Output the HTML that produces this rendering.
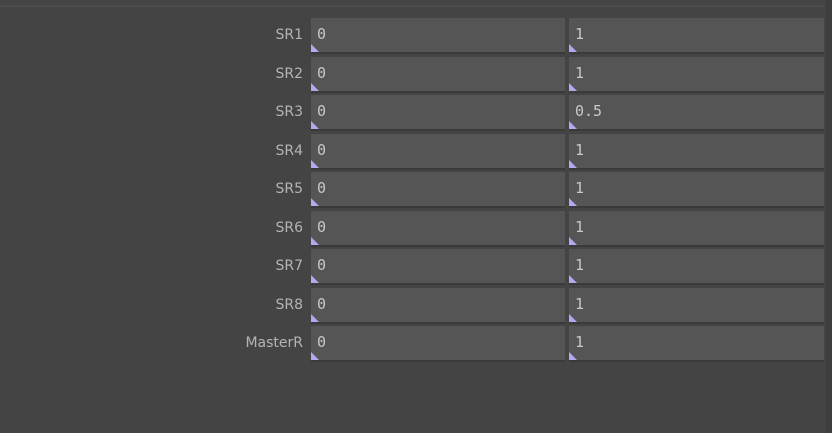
<!DOCTYPE html><html><head><style>
body{margin:0;width:832px;height:433px;background:#444;position:relative;overflow:hidden;font-family:"DejaVu Sans","Liberation Sans",sans-serif;}
.top{position:absolute;left:0;top:5px;width:824px;height:2px;background:#4c4c4c}
.rc{position:absolute;left:826px;top:0;width:6px;height:433px;background:#3e3e3e}
.lab{position:absolute;right:529px;width:120px;text-align:right;font-size:14px;color:#b4b4b4}
.f{position:absolute;height:34px;background:#555;border-bottom:2px solid #3a3a3a;color:#c8c8c8;font-size:15px;font-family:"DejaVu Sans Mono","Liberation Mono",monospace;}
.f span{position:absolute;left:6px;top:7px}
.f i{position:absolute;left:0;bottom:0;width:0;height:0;border-left:8px solid #b4a8f0;border-top:8px solid transparent}
</style></head><body>
<div class="top"></div><div class="rc"></div>
<div id="c"></div>
<script>
var l=["SR1","SR2","SR3","SR4","SR5","SR6","SR7","SR8","MasterR"],h="";
for(var k=0;k<9;k++){var y=18+k*38.5;
h+='<div class="lab" style="top:'+(y+9)+'px">'+l[k]+'</div>';
h+='<div class="f" style="left:311px;width:254px;top:'+y+'px"><span>0</span><i></i></div>';
h+='<div class="f" style="left:569px;width:255px;top:'+y+'px"><span>'+(k==2?'0.5':'1')+'</span><i></i></div>';}
document.getElementById('c').innerHTML=h;
</script>
</body></html>
